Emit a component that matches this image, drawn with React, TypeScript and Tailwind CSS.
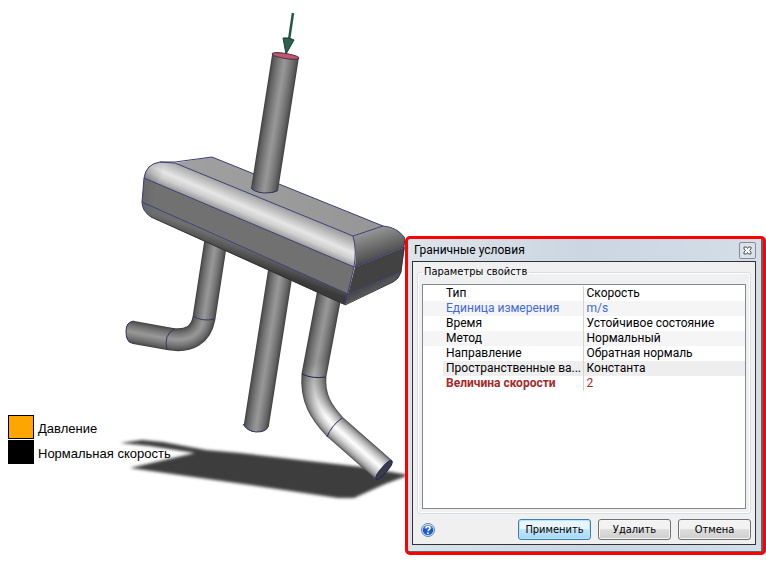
import React from 'react';

type Tone = 'normal' | 'blue' | 'red';

const properties: { name: string; value: string; tone: Tone; shade?: string }[] = [
  { name: 'Тип', value: 'Скорость', tone: 'normal' },
  { name: 'Единица измерения', value: 'm/s', tone: 'blue', shade: 'bg-[#f5f5f5]' },
  { name: 'Время', value: 'Устойчивое состояние', tone: 'normal' },
  { name: 'Метод', value: 'Нормальный', tone: 'normal', shade: 'bg-[#f5f5f5]' },
  { name: 'Направление', value: 'Обратная нормаль', tone: 'normal' },
  { name: 'Пространственные ва...', value: 'Константа', tone: 'normal', shade: 'bg-[#eeeeee]' },
  { name: 'Величина скорости', value: '2', tone: 'red' },
];

const toneClass: Record<Tone, string> = {
  normal: 'text-black',
  blue: 'text-[#4169e1]',
  red: 'text-[#a52a2a]',
};

const legend = [
  { label: 'Давление', color: 'bg-[#ffa500]' },
  { label: 'Нормальная скорость', color: 'bg-black' },
];

// Tube shading: concentric strokes, dark at the rim and light on the axis
const Tube = ({ d, width, lit = false, clip }: { d: string; width: number; lit?: boolean; clip?: string }) => {
  const steps = 14;
  return (
    <g fill="none" clipPath={clip ? `url(#${clip})` : undefined}>
      {Array.from({ length: steps }, (_, i) => {
        const t = i / (steps - 1);
        const level = Math.round(66 + 84 * Math.pow(t, 0.7));
        const bright = Math.round(84 + 166 * Math.pow(t, 0.55));
        const id = `lit${i}`;
        return (
          <React.Fragment key={i}>
            {lit && (
              <linearGradient id={id} gradientUnits="userSpaceOnUse" x1="312" y1="364" x2="333" y2="414">
                <stop offset="0" stopColor={`rgb(${level},${level},${level})`} />
                <stop offset="1" stopColor={`rgb(${bright},${bright},${bright})`} />
              </linearGradient>
            )}
            <path
              d={d}
              strokeWidth={width * (1 - t * 0.92)}
              stroke={lit ? `url(#${id})` : `rgb(${level},${level},${level})`}
            />
          </React.Fragment>
        );
      })}
    </g>
  );
};

const ModelView = () => (
  <svg viewBox="0 0 405 561" className="block w-full" role="img" aria-label="Модель">
    <defs>
      <filter id="soft" x="-10%" y="-30%" width="120%" height="160%">
        <feGaussianBlur stdDeviation="1.8" />
      </filter>
      <clipPath id="inletClip">
        <path d="M240 40 H320 L300 191 H277 Q273 193 264 193 Q254 192 251 188 H240Z" />
      </clipPath>
      <clipPath id="middleClip">
        <path d="M230 260 H310 L290 427 H268 Q266 432 256 432 Q247 431 243 424 H230Z" />
      </clipPath>
      <clipPath id="leftClip">
        <path d="M134 321 Q126 322 126 331 Q126 341 131 343 L160 370 H240 V235 H190 L160 310Z" />
      </clipPath>
      <linearGradient id="topFace" x1="0" y1="0" x2="1" y2="0">
        <stop offset="0" stopColor="#a0a0a0" />
        <stop offset="1" stopColor="#969696" />
      </linearGradient>
      <linearGradient id="fillet" gradientUnits="userSpaceOnUse" x1="262" y1="199" x2="250" y2="227">
        <stop offset="0" stopColor="#a2a2a2" />
        <stop offset="0.45" stopColor="#e6e6e6" />
        <stop offset="0.65" stopColor="#d0d0d0" />
        <stop offset="1" stopColor="#7c7c7c" />
      </linearGradient>
      <linearGradient id="under" gradientUnits="userSpaceOnUse" x1="250" y1="248" x2="245" y2="262">
        <stop offset="0" stopColor="#6e6e6e" />
        <stop offset="1" stopColor="#3a3a3a" />
      </linearGradient>
      <linearGradient id="sideTop" gradientUnits="userSpaceOnUse" x1="374" y1="228" x2="384" y2="258">
        <stop offset="0" stopColor="#999999" />
        <stop offset="1" stopColor="#484848" />
      </linearGradient>
      <linearGradient id="sideLow" gradientUnits="userSpaceOnUse" x1="374" y1="282" x2="380" y2="294">
        <stop offset="0" stopColor="#474747" />
        <stop offset="1" stopColor="#666666" />
      </linearGradient>
      <linearGradient id="leftCap" gradientUnits="userSpaceOnUse" x1="136" y1="0" x2="164" y2="0">
        <stop offset="0" stopColor="#555555" stopOpacity="0.6" />
        <stop offset="1" stopColor="#777777" stopOpacity="0" />
      </linearGradient>
    </defs>

    {/* ground shadow */}
    <g filter="url(#soft)" fill="#3c3c3c">
      <path d="M120 443 L142 440 L163 442 L206 450 L240 453 L300 460 L362 467 L409 475 L385 484 L354 498 L338 498 L250 485 L130 468 L160 461 L195 453 L150 446Z" />
    </g>

    {/* lower tubes */}
    <Tube d="M216 240 L204 318 C201 335 189 342 170 339 L120 330" width={23} clip="leftClip" />
    <g fill="none" stroke="#35356a">
      <path d="M193 316 Q202 322 215 319" />
      <path d="M175 329 Q163 334 167 350" />
      <path d="M134 321 Q126 322 126 331 Q126 341 131 343" />
    </g>

    <Tube d="M281 268 L255 434" width={25} clip="middleClip" />
    <path d="M243 424 Q247 431 256 432 Q266 432 268 427" fill="none" stroke="#35356a" />

    <Tube d="M330 290 L314 375 C312 398 321 412 335 427 L384 470" width={25} lit />
    <g fill="none" stroke="#25255a">
      <path d="M302 374 Q312 379 326 377" />
      <path d="M342 418 Q331 426 327 437" />
    </g>
    <ellipse cx="384" cy="470" rx="12" ry="3" transform="rotate(-49 384 470)" fill="#3c3c48" stroke="#25255a" />

    {/* manifold body */}
    <path d="M175 163 L212 157 L383 226 L353 236Z" fill="url(#topFace)" />
    <path d="M175 163 L353 236 Q357 250 354 267 L144 178 Q146 164 160 162Z" fill="url(#fillet)" />
    <path d="M144 178 L354 267 L348 294 L142 202Z" fill="#717171" />
    <path d="M142 202 L348 294 L345 305 L340 303 L151 217 Q142 211 142 202Z" fill="url(#under)" />
    <path d="M144 178 Q146 164 160 162 L172 163 L155 184 L153 217 Q142 211 142 202Z" fill="url(#leftCap)" />
    <path d="M353 236 L383 226 Q397 227 405 238 L404 247 L355 267 Q357 250 353 236Z" fill="url(#sideTop)" />
    <path d="M355 267 L405 247 L401 272 L348 294Z" fill="#424242" />
    <path d="M348 294 L401 272 Q399 279 393 282 L344 305Z" fill="url(#sideLow)" />
    <g fill="none" stroke="#3c3c78">
      <path d="M160 162 L175 163 L353 236 L383 226" />
      <path d="M144 178 L354 267 L404 247" />
      <path d="M142 202 L348 294 L401 272" />
      <path d="M353 236 Q357 250 354 267 L345 305" />
      <path d="M151 217 Q142 211 142 202 L144 178 Q146 164 160 162 L175 162 L212 157 L383 226 Q397 227 405 238" />
      <path d="M405 238 L401 272 Q399 279 393 282 L345 305" stroke="#35354d" />
    </g>
    <path d="M151 217 L344 304" stroke="#333" />

    {/* inlet tube and flow arrow */}
    <Tube d="M285.5 56 L263.5 196" width={27} clip="inletClip" />
    <path d="M251 188 Q254 192 264 193 Q273 193 277 191" fill="none" stroke="#35356a" />
    <ellipse cx="285.5" cy="56" rx="13.5" ry="2.5" transform="rotate(9 285.5 56)" fill="#c4566c" stroke="#55354d" />
    <path d="M293 13 L289 40" stroke="#24584a" strokeWidth="2.5" />
    <path d="M283 38 Q289 37 294 40 L286 54Z" fill="#2c604f" stroke="#203c35" />
  </svg>
);

const Legend = () => (
  <ul className="absolute left-2 top-[415px] flex flex-col gap-px font-['Liberation_Sans',Arial,sans-serif] text-[13px] text-black">
    {legend.map((item) => (
      <li key={item.label} className="flex h-6 items-center gap-1 whitespace-nowrap">
        <span className={`h-6 w-[26px] border border-black ${item.color}`} />
        <span className="pt-1 leading-4">{item.label}</span>
      </li>
    ))}
  </ul>
);

const HelpIcon = () => (
  <svg viewBox="0 0 14 14" className="size-[14px]" aria-hidden="true">
    <defs>
      <linearGradient id="helpBall" x1="0" y1="0" x2="0" y2="1">
        <stop offset="0" stopColor="#6b9ced" />
        <stop offset="0.5" stopColor="#174fc4" />
        <stop offset="1" stopColor="#2c71dc" />
      </linearGradient>
    </defs>
    <circle cx="7" cy="7" r="6.5" fill="#e4edf8" stroke="#5880b5" />
    <circle cx="7" cy="7" r="5.3" fill="url(#helpBall)" />
    <path d="M5 5.4 C5 2.8 9.2 2.9 9.1 5.2 C9 6.6 7.1 6.5 7 8.3" fill="none" stroke="#fff" strokeWidth="1.5" />
    <circle cx="6.9" cy="10.2" r="0.9" fill="#fff" />
  </svg>
);

const DialogButton = ({ children, primary = false }: { children: string; primary?: boolean }) => (
  <button
    type="button"
    className={`h-[21px] w-[73px] rounded-[3px] border text-center font-['DejaVu_Sans_Condensed','DejaVu_Sans',sans-serif] text-[11px] leading-[19px] ${
      primary
        ? 'border-[#3c7fb1] bg-linear-to-b from-[#e8f5fc] from-45% via-[#c4e5f7] via-50% to-[#a6d8f2] shadow-[inset_0_0_0_1px_#b8e4f7]'
        : 'border-[#707070] bg-linear-to-b from-[#f2f2f2] from-45% via-[#dddddd] via-50% to-[#cfcfcf] shadow-[inset_0_0_0_1px_#f6f6f6]'
    }`}
  >
    {children}
  </button>
);

const BoundaryDialog = () => (
  <section
    role="dialog"
    aria-labelledby="dialog-title"
    className="mt-[236px] w-[361px] shrink-0 self-start rounded-[5px] border-[3px] border-[#ff0000] bg-[#ff0000] font-[Roboto,sans-serif] text-[12px] text-black"
  >
    <div className="rounded-[2px] border-r-2 border-b border-[#5b6670] bg-linear-to-r from-[#dde4ea] via-[#cbd6e2] to-[#d3dee9] pr-[5px] pb-[6px] pl-1">
      <header className="flex h-[22px] items-center justify-between pl-0.5">
        <h1 id="dialog-title" className="leading-4">Граничные условия</h1>
        <button
          type="button"
          aria-label="Закрыть"
          className="flex h-[17px] w-[17px] items-center justify-center rounded-[2px] border border-[#838c97] bg-[#dbe2e9]"
        >
          <svg viewBox="0 0 9 9" className="size-[9px]" aria-hidden="true">
            <path d="M1 1 H3.500 L4.500 2.500 L5.500 1 H8 V3 L6.500 4.500 L8 6 V8 H5.500 L4.500 6.500 L3.500 8 H1 V6 L2.500 4.500 L1 3Z" fill="#fff" stroke="#4d535c" />
          </svg>
        </button>
      </header>
      <div className="border border-[#30343a] bg-[#f0f0f0] px-1 pt-0.5 pb-1">
        <fieldset className="rounded-[3px] border border-[#d5dfe5] px-1 pt-1 pb-1 shadow-[inset_0_0_0_1px_#fff]">
          <legend className="px-0.5 font-['DejaVu_Sans_Condensed','DejaVu_Sans',sans-serif] text-[11px] leading-4">
            Параметры свойств
          </legend>
          <div className="h-[225px] border border-[#828790] bg-white pt-px">
            <table className="w-full table-fixed border-collapse">
              <colgroup>
                <col className="w-5" />
                <col className="w-[140px]" />
                <col />
              </colgroup>
              <tbody>
                {properties.map((row, i) => (
                  <tr key={row.name} className={`h-[15px] leading-[15px] whitespace-nowrap ${toneClass[row.tone]}`}>
                    <td className={`p-0 ${i === 5 ? '' : row.shade ?? ''}`} />
                    <th
                      scope="row"
                      className={`border-r border-[#d4d4d4] p-0 pl-[3px] text-left ${row.tone === 'red' ? 'font-bold' : 'font-normal'} ${row.shade ?? ''}`}
                    >
                      {row.name}
                    </th>
                    <td className={`p-0 pl-[3px] ${row.shade ?? ''}`}>{row.value}</td>
                  </tr>
                ))}
              </tbody>
            </table>
          </div>
        </fieldset>
        <footer className="flex items-center gap-[7px] pt-[5px]">
          <button type="button" aria-label="Справка" className="mr-auto ml-1">
            <HelpIcon />
          </button>
          <DialogButton primary>Применить</DialogButton>
          <DialogButton>Удалить</DialogButton>
          <DialogButton>Отмена</DialogButton>
        </footer>
      </div>
    </div>
  </section>
);

export default function App() {
  return (
    <main className="flex min-h-screen bg-white">
      <div className="relative min-w-0 flex-1">
        <ModelView />
        <Legend />
      </div>
      <BoundaryDialog />
    </main>
  );
}
